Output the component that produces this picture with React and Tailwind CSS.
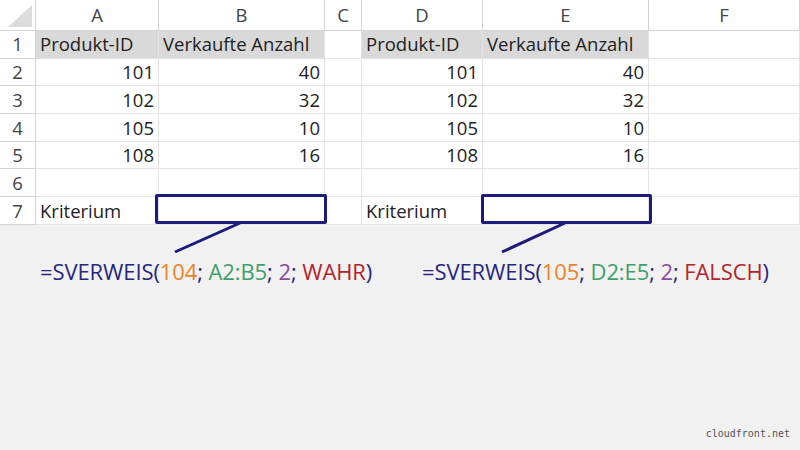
const cols = ["A", "B", "C", "D", "E", "F"];

const rows = [
  { n: 1, cells: ["Produkt-ID", "Verkaufte Anzahl", "", "Produkt-ID", "Verkaufte Anzahl", ""], head: true },
  { n: 2, cells: ["101", "40", "", "101", "40", ""] },
  { n: 3, cells: ["102", "32", "", "102", "32", ""] },
  { n: 4, cells: ["105", "10", "", "105", "10", ""] },
  { n: 5, cells: ["108", "16", "", "108", "16", ""] },
  { n: 6, cells: ["", "", "", "", "", ""] },
  { n: 7, cells: ["Kriterium", "", "", "Kriterium", "", ""], label: true },
];

const grid = "grid grid-cols-[36px_123px_166px_37px_121px_166px_1fr]";

function Cell({ value, row, col }) {
  const shaded = row.head && (col === 0 || col === 1 || col === 3 || col === 4);
  const isNum = /^\d+$/.test(value);
  return (
    <div
      className={`h-[27.7px] border-r border-b border-[#e3e3e3] flex items-center px-[4px] text-[18.5px] text-[#222] whitespace-nowrap overflow-visible ${
        shaded ? "bg-[#d9d9d9]" : "bg-white"
      } ${isNum ? "justify-end" : "justify-start"}`}
    >
      {value}
    </div>
  );
}

function Formula({ num, range, bool }) {
  return (
    <div className="text-[22px] leading-none tracking-[-0.1px]">
      <span className="text-[#27277d]">=SVERWEIS(</span>
      <span className="text-[#ea842c]">{num}</span>
      <span className="text-[#27277d]">; </span>
      <span className="text-[#3f9f6a]">{range}</span>
      <span className="text-[#27277d]">; </span>
      <span className="text-[#8c4c9f]">2</span>
      <span className="text-[#27277d]">; </span>
      <span className="text-[#b3242a]">{bool}</span>
      <span className="text-[#27277d]">)</span>
    </div>
  );
}

export default function App() {
  return (
    <div className="relative w-[800px] h-[450px] bg-[#f1f1f1] overflow-hidden font-['Open_Sans','Noto_Sans',sans-serif]">
      <div className="bg-white">
        <div className={`${grid} h-[31px]`}>
          <div className="relative border-r border-b border-[#d4d4d4]">
            <svg className="absolute right-[3px] bottom-[3px]" width="24" height="22" viewBox="0 0 24 22">
              <polygon points="24,0 24,22 0,22" fill="#dcdcdc" />
            </svg>
          </div>
          {cols.map((c) => (
            <div
              key={c}
              className="flex items-center justify-center border-r border-b border-[#d4d4d4] text-[18.5px] text-[#444]"
            >
              {c}
            </div>
          ))}
        </div>
        {rows.map((row) => (
          <div key={row.n} className={grid}>
            <div className="h-[27.7px] flex items-center justify-center border-r border-b border-[#d4d4d4] text-[18.5px] text-[#444]">
              {row.n}
            </div>
            {row.cells.map((v, i) => (
              <Cell key={i} value={v} row={row} col={i} />
            ))}
          </div>
        ))}
      </div>

      <div className="flex pt-[35px]">
        <div className="pl-[40px] w-[422px]">
          <Formula num="104" range="A2:B5" bool="WAHR" />
        </div>
        <Formula num="105" range="D2:E5" bool="FALSCH" />
      </div>

      <div className="absolute left-[155px] top-[194px] w-[172px] h-[30px] border-[3px] border-[#1b1b7c] rounded-[2px]" />
      <div className="absolute left-[481px] top-[194px] w-[171px] h-[30px] border-[3px] border-[#1b1b7c] rounded-[2px]" />
      <svg className="absolute left-0 top-0 pointer-events-none" width="800" height="450">
        <line x1="240" y1="223" x2="175" y2="252" stroke="#1b1b7c" strokeWidth="3" />
        <line x1="565" y1="223" x2="502" y2="252" stroke="#1b1b7c" strokeWidth="3" />
      </svg>

      <div className="absolute right-[10px] bottom-[9px] text-[10px] text-[#555] font-['DejaVu_Sans_Mono',monospace]">
        cloudfront.net
      </div>
    </div>
  );
}
